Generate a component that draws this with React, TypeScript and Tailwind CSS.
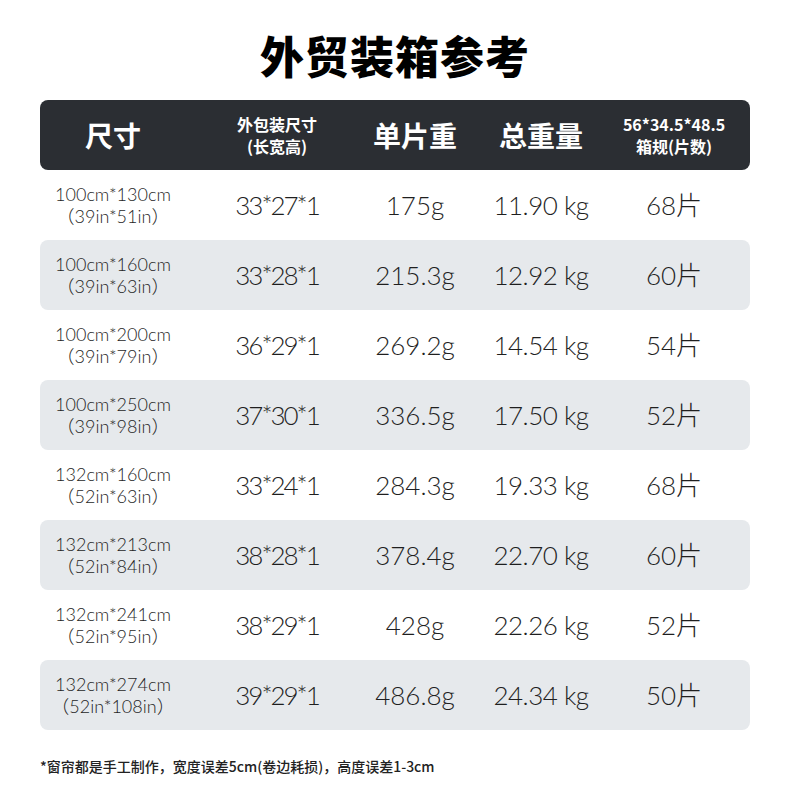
const rows = [
  { size: '100cm*130cm', inch: '39in*51in', box: '33*27*1', unit: '175g', total: '11.90 kg', count: '68片' },
  { size: '100cm*160cm', inch: '39in*63in', box: '33*28*1', unit: '215.3g', total: '12.92 kg', count: '60片' },
  { size: '100cm*200cm', inch: '39in*79in', box: '36*29*1', unit: '269.2g', total: '14.54 kg', count: '54片' },
  { size: '100cm*250cm', inch: '39in*98in', box: '37*30*1', unit: '336.5g', total: '17.50 kg', count: '52片' },
  { size: '132cm*160cm', inch: '52in*63in', box: '33*24*1', unit: '284.3g', total: '19.33 kg', count: '68片' },
  { size: '132cm*213cm', inch: '52in*84in', box: '38*28*1', unit: '378.4g', total: '22.70 kg', count: '60片' },
  { size: '132cm*241cm', inch: '52in*95in', box: '38*29*1', unit: '428g', total: '22.26 kg', count: '52片' },
  { size: '132cm*274cm', inch: '52in*108in', box: '39*29*1', unit: '486.8g', total: '24.34 kg', count: '50片' },
];

const font = { fontFamily: '"Noto Sans CJK SC", "Noto Sans", sans-serif' };
const dataFont = { fontFamily: 'Lato, "Noto Sans CJK SC", sans-serif' };
const cols = 'grid grid-cols-[146px_182px_94px_158px_108px] h-[70px] items-center';
const cell = 'flex justify-center items-center whitespace-nowrap';

export default function App() {
  return (
    <div className="w-[790px] h-[800px] bg-white px-[40px] text-[#222]" style={font}>
      <div className="h-[100px] pt-[10px] flex items-center justify-center">
        <h1 className="text-[44px] font-black text-black leading-none tracking-[1px]">外贸装箱参考</h1>
      </div>

      <div className={`${cols} bg-[#2b2e33] rounded-[8px] text-white`}>
        <div className={cell}>
          <span className="text-[28px] font-bold">尺寸</span>
        </div>
        <div className={`${cell} flex-col text-[16px] font-bold leading-[22px]`}>
          <span>外包装尺寸</span>
          <span>(长宽高)</span>
        </div>
        <div className={cell}>
          <span className="text-[28px] font-bold">单片重</span>
        </div>
        <div className={cell}>
          <span className="text-[28px] font-bold">总重量</span>
        </div>
        <div className={`${cell} flex-col text-[16px] font-bold leading-[22px]`}>
          <span>56*34.5*48.5</span>
          <span>箱规(片数)</span>
        </div>
      </div>

      {rows.map((r, i) => (
        <div
          key={r.size}
          className={`${cols} rounded-[8px] font-light text-[#1f1f1f] ${i % 2 === 1 ? 'bg-[#e6e9ec]' : ''}`}
          style={dataFont}
        >
          <div className={`${cell} flex-col text-[18px] leading-[22px]`}>
            <span>{r.size}</span>
            <span>（{r.inch}）</span>
          </div>
          <div className={`${cell} text-[26px] tracking-[-2px]`}>{r.box}</div>
          <div className={`${cell} text-[26px]`}>{r.unit}</div>
          <div className={`${cell} text-[26px] tracking-[-0.5px]`}>{r.total}</div>
          <div className={`${cell} text-[26px]`}>{r.count}</div>
        </div>
      ))}

      <p className="mt-[26px] text-[14px] font-medium text-[#222]">
        *窗帘都是手工制作，宽度误差5cm(卷边耗损)，高度误差1-3cm
      </p>
    </div>
  );
}
